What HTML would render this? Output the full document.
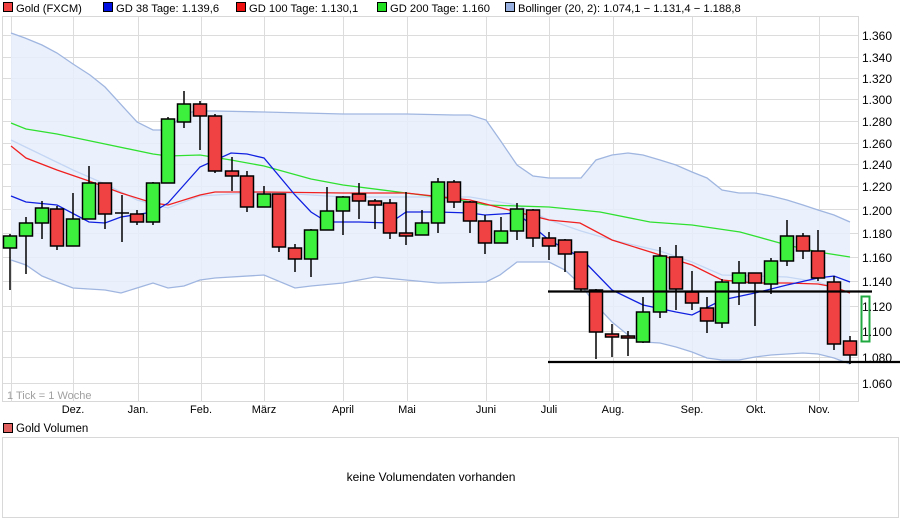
<!DOCTYPE html>
<html><head><meta charset="utf-8"><style>
body{margin:0;background:#fff;width:900px;height:526px;overflow:hidden;font-family:"Liberation Sans",sans-serif}
</style></head><body>
<svg width="900" height="526" xmlns="http://www.w3.org/2000/svg" style="display:block" font-family="Liberation Sans, sans-serif" font-size="12">
<rect width="900" height="526" fill="#fff"/>
<g font-size="11.2">
<rect x="3.5" y="2.5" width="9" height="9" fill="#f04040" stroke="#000"/><text x="16" y="12">Gold (FXCM)</text>
<rect x="103.5" y="2.5" width="9" height="9" fill="#0010e0" stroke="#000"/><text x="116" y="12">GD 38 Tage: 1.139,6</text>
<rect x="236.5" y="2.5" width="9" height="9" fill="#f01010" stroke="#000"/><text x="249" y="12">GD 100 Tage: 1.130,1</text>
<rect x="377.5" y="2.5" width="9" height="9" fill="#20e020" stroke="#000"/><text x="390" y="12">GD 200 Tage: 1.160</text>
<rect x="505.5" y="2.5" width="9" height="9" fill="#98b0e0" stroke="#000"/><text x="518" y="12">Bollinger (20, 2): 1.074,1 − 1.131,4 − 1.188,8</text>
</g>
<rect x="2.5" y="16.5" width="856" height="385" fill="#fff" stroke="#d8d8d8"/>
<g stroke="#dcdcdc" stroke-width="1">
<path d="M3 35.5H858M3 57.5H858M3 78.5H858M3 99.5H858M3 121.5H858M3 143.5H858M3 164.5H858M3 186.5H858M3 209.5H858M3 233.5H858M3 257.5H858M3 281.5H858M3 306.5H858M3 331.5H858M3 357.5H858M3 383.5H858"/>
<path d="M11.5 17V402M73.5 17V402M138.5 17V402M201.5 17V402M264.5 17V402M343.5 17V402M407.5 17V402M486.5 17V402M549.5 17V402M613.5 17V402M692.5 17V402M756.5 17V402M819.5 17V402"/>
</g>
<path fill="#e6eefb" fill-opacity="0.85" d="M11 33L25 38L42 45L57 53L73 64L90 75L105 87L137 122L153 130L168 130L184 113L200 111L215 111L264 112L343 114L406 114L454 115L470 115L486 120L500 140L517 165L533 176L549 178L581 178L596 160L612 155L628 153L643 155L660 160L676 165L692 172L707 178L722 190L739 193L755 193L771 196L787 200L803 205L818 210L834 215L850 222L850 364L834 358L818 354L803 353L787 354L771 355L755 357L739 360L722 360L707 358L692 352L676 347L660 343L643 342L628 335L612 322L596 305L581 285L565 270L549 262L517 262L500 275L486 282L438 283L406 280L375 277L343 283L311 286L295 288L264 275L215 278L200 280L184 286L168 288L153 283L137 288L121 293L105 290L73 288L57 282L42 276L26 265L11 260Z"/>
<g fill="none" stroke-width="1.3">
<path stroke="#a0b6e0" d="M11 33L25 38L42 45L57 53L73 64L90 75L105 87L137 122L153 130L168 130L184 113L200 111L215 111L264 112L343 114L406 114L454 115L470 115L486 120L500 140L517 165L533 176L549 178L581 178L596 160L612 155L628 153L643 155L660 160L676 165L692 172L707 178L722 190L739 193L755 193L771 196L787 200L803 205L818 210L834 215L850 222"/>
<path stroke="#a0b6e0" d="M11 260L26 265L42 276L57 282L73 288L105 290L121 293L137 288L153 283L168 288L184 286L200 280L215 278L264 275L295 288L311 286L343 283L375 277L406 280L438 283L486 282L500 275L517 262L549 262L565 270L581 285L596 305L612 322L628 335L643 342L660 343L676 347L692 352L707 358L722 360L739 360L755 357L771 355L787 354L803 353L818 354L834 358L850 364"/>
<path stroke="#c4d6f4" d="M11 140L42 155L73 170L105 184L137 200L168 208L200 196L264 192L343 197L406 197L470 197L517 205L549 220L581 231L612 240L660 251L692 262L722 275L755 276L787 277L818 282L850 293"/>
<path stroke="#30e030" d="M11 123L26 129L57 134L105 144L153 154L168 156L200 155L231 160L264 166L311 179L343 185L406 193L454 199L486 205L549 207L600 212L650 222L692 225L740 232L787 245L818 252L850 257"/>
<path stroke="#f02020" d="M11 146L26 158L57 170L89 181L121 193L153 203L168 205L200 195L215 192L264 192L343 193L406 193L470 200L517 212L549 220L580 223L612 240L660 255L692 265L722 280L755 283L787 283L818 284L834 287L850 293"/>
<path stroke="#1020e0" d="M11 196L26 202L57 205L89 222L105 223L121 217L153 212L168 203L184 185L200 167L231 153L247 154L264 158L295 195L311 212L327 222L359 222L390 223L406 212L438 212L470 213L485 215L517 213L549 240L580 257L612 290L643 305L676 312L692 315L722 300L755 293L787 285L818 278L834 276L850 282"/>
</g>
<g stroke="#000" stroke-width="1.5" id="c"></g>
<path d="M548 291.5H872M548 362H900" stroke="#000" stroke-width="2.2"/>
<rect x="861.5" y="296.5" width="8" height="45" fill="none" stroke="#20a840" stroke-width="2"/>
<g font-size="12" fill="#000">
<text x="862" y="40">1.360</text><text x="862" y="62">1.340</text><text x="862" y="83">1.320</text><text x="862" y="104">1.300</text><text x="862" y="126">1.280</text><text x="862" y="148">1.260</text><text x="862" y="169">1.240</text><text x="862" y="191">1.220</text><text x="862" y="215">1.200</text><text x="862" y="238">1.180</text><text x="862" y="262">1.160</text><text x="862" y="286">1.140</text><text x="862" y="311">1.120</text><text x="862" y="336">1.100</text><text x="862" y="362">1.080</text><text x="862" y="388">1.060</text>
</g>
<text x="7" y="399" font-size="11" fill="#a0a0a0">1 Tick = 1 Woche</text>
<g font-size="11" text-anchor="middle">
<text x="73" y="413">Dez.</text><text x="138" y="413">Jan.</text><text x="201" y="413">Feb.</text><text x="264" y="413">März</text><text x="343" y="413">April</text><text x="407" y="413">Mai</text><text x="486" y="413">Juni</text><text x="549" y="413">Juli</text><text x="613" y="413">Aug.</text><text x="692" y="413">Sep.</text><text x="756" y="413">Okt.</text><text x="819" y="413">Nov.</text>
</g>
<rect x="3.5" y="423.5" width="9" height="9" fill="#e06060" stroke="#000"/><text x="16" y="432" font-size="11.5">Gold Volumen</text>
<rect x="2.5" y="437.5" width="896" height="80" fill="#fff" stroke="#d8d8d8"/>
<text x="431" y="481" text-anchor="middle">keine Volumendaten vorhanden</text>
</svg>
<script>
var d=[[10,'g',236,248,234,290],[26,'g',223,236,217,274],[42,'g',208,223,201,239],[57,'r',209,246,206,250],[73,'g',219,246,193,246],[89,'g',183,219,166,219],[105,'r',183,214,183,229],[122,'d',213,215,195,242],[137,'r',214,222,210,225],[153,'g',183,222,182,225],[168,'g',119,183,117,183],[184,'g',104,122,91,128],[200,'r',104,116,101,150],[215,'r',116,171,114,173],[232,'r',171,176,157,191],[247,'r',176,207,171,212],[264,'g',194,207,186,207],[279,'r',194,247,194,252],[295,'r',248,259,244,272],[311,'g',230,259,229,277],[327,'g',211,230,187,230],[343,'g',197,211,196,235],[359,'r',194,201,183,219],[375,'r',201,205,199,229],[390,'r',203,233,199,239],[406,'r',233,236,192,245],[422,'g',223,235,210,235],[438,'g',182,223,178,233],[454,'r',182,202,180,208],[470,'r',202,221,201,233],[485,'r',221,243,215,254],[501,'g',231,243,217,243],[517,'g',209,231,203,240],[533,'r',210,238,209,247],[549,'r',238,246,232,260],[565,'r',240,254,239,272],[581,'r',252,289,252,292],[596,'r',290,332,289,359],[612,'r',334,337,324,357],[628,'r',336,338,331,356],[643,'g',312,342,297,343],[660,'g',256,312,247,318],[676,'r',257,289,245,310],[692,'r',292,303,271,310],[707,'r',308,321,297,333],[722,'g',282,323,279,328],[739,'g',273,283,261,305],[755,'r',273,283,273,326],[771,'g',261,284,258,294],[787,'g',236,261,220,266],[803,'r',236,251,233,259],[818,'r',251,278,230,281],[834,'r',282,344,276,350],[850,'r',341,355,336,364]];
var g=document.getElementById('c'),s='';
d.forEach(function(c){var x=c[0];s+='<line x1="'+x+'" x2="'+x+'" y1="'+c[4]+'" y2="'+c[5]+'"/>';
if(c[1]=='d'){s+='<line x1="'+(x-7)+'" x2="'+(x+7)+'" y1="'+c[2]+'" y2="'+c[2]+'"/>';}
else{s+='<rect x="'+(x-6.5)+'" y="'+c[2]+'" width="13" height="'+Math.max(2,c[3]-c[2])+'" fill="'+(c[1]=='g'?'#3ef03e':'#f04242')+'"/>';}});
g.innerHTML=s;
</script>
</body></html>
